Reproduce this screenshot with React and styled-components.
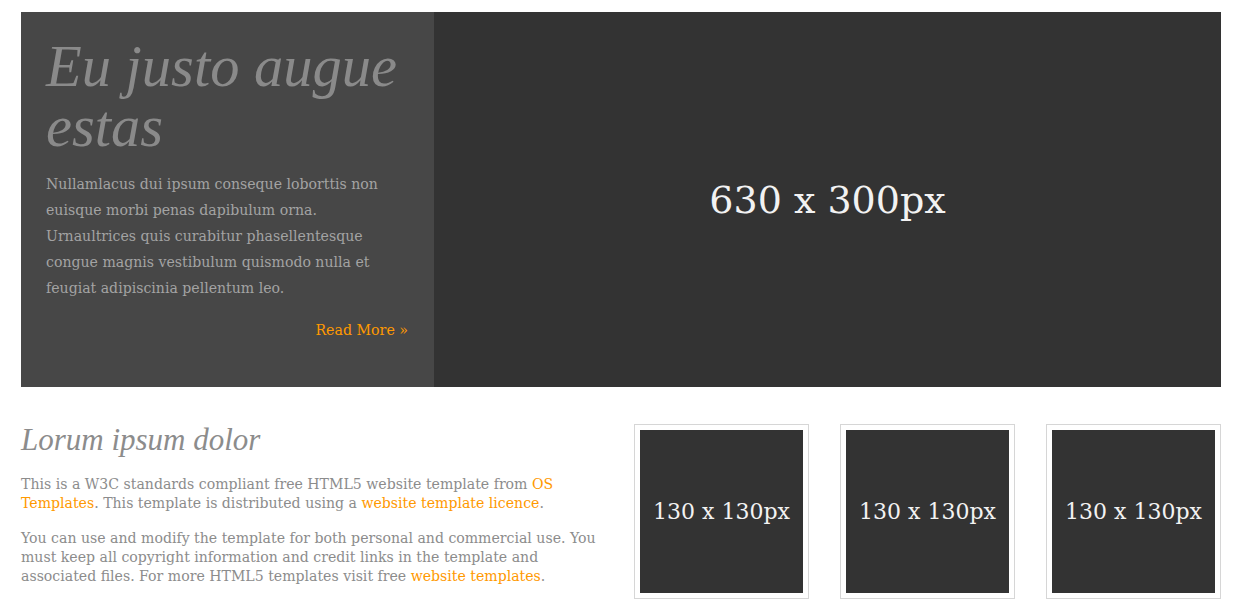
import React from "react";
import styled, { createGlobalStyle } from "styled-components";

const GlobalStyle = createGlobalStyle`
  body {
    margin: 0;
    background: #ffffff;
    font-family: "DejaVu Serif", Georgia, serif;
  }
`;

const Page = styled.div`
  width: 1200px;
  padding: 12px 0 0 21px;
`;

const Hero = styled.section`
  display: flex;
  height: 375px;
  background: #333333;
`;

const HeroText = styled.div`
  width: 413px;
  box-sizing: border-box;
  padding: 25px 26px 0 25px;
  background: #474747;
  display: flex;
  flex-direction: column;
`;

const HeroTitle = styled.h1`
  margin: 0;
  font-family: "Liberation Serif", Georgia, serif;
  font-size: 58.5px;
  line-height: 60px;
  font-style: italic;
  font-weight: normal;
  color: #8a8a8a;
`;

const HeroCopy = styled.p`
  margin: 14px 0 0;
  font-size: 14.1px;
  line-height: 26px;
  color: #a3a3a3;
`;

const ReadMore = styled.a`
  margin-top: 16px;
  align-self: flex-end;
  font-size: 14.2px;
  line-height: 26px;
  color: #ff9900;
  text-decoration: none;
`;

const Placeholder = styled.div`
  flex: 1;
  display: flex;
  align-items: center;
  justify-content: center;
  background: #333333;
  color: #f2f2f2;
  font-size: ${(p) => p.$size}px;
`;

const Lower = styled.section`
  display: flex;
  gap: 33px;
  margin-top: 37px;
`;

const Intro = styled.div`
  width: 580px;
  color: #8c8c8c;
  font-size: 14.1px;
  line-height: 19px;
`;

const IntroTitle = styled.h2`
  margin: 0 0 19px;
  font-family: "Liberation Serif", Georgia, serif;
  font-size: 31px;
  line-height: 32px;
  font-style: italic;
  font-weight: normal;
  color: #8c8c8c;
`;

const IntroCopy = styled.p`
  margin: 0 0 16px;
`;

const Link = styled.a`
  color: #ff9900;
  text-decoration: none;
`;

const Thumbs = styled.div`
  display: flex;
  gap: 31px;
`;

const Thumb = styled.figure`
  margin: 0;
  width: 175px;
  height: 175px;
  box-sizing: border-box;
  padding: 5px;
  border: 1px solid #d6d6d6;
  display: flex;
`;

export default function App() {
  return (
    <>
      <GlobalStyle />
      <Page>
        <Hero>
          <HeroText>
            <HeroTitle>Eu justo augue estas</HeroTitle>
            <HeroCopy>
              Nullamlacus dui ipsum conseque loborttis non euisque morbi penas
              dapibulum orna. Urnaultrices quis curabitur phasellentesque
              congue magnis vestibulum quismodo nulla et feugiat adipiscinia
              pellentum leo.
            </HeroCopy>
            <ReadMore href="#">Read More &raquo;</ReadMore>
          </HeroText>
          <Placeholder $size={38}>630 x 300px</Placeholder>
        </Hero>
        <Lower>
          <Intro>
            <IntroTitle>Lorum ipsum dolor</IntroTitle>
            <IntroCopy>
              This is a W3C standards compliant free HTML5 website template
              from <Link href="#">OS Templates</Link>. This template is
              distributed using a{" "}
              <Link href="#">website template licence</Link>.
            </IntroCopy>
            <IntroCopy>
              You can use and modify the template for both personal and
              commercial use. You must keep all copyright information and
              credit links in the template and associated files. For more
              HTML5 templates visit free{" "}
              <Link href="#">website templates</Link>.
            </IntroCopy>
          </Intro>
          <Thumbs>
            {[1, 2, 3].map((n) => (
              <Thumb key={n}>
                <Placeholder $size={22}>130 x 130px</Placeholder>
              </Thumb>
            ))}
          </Thumbs>
        </Lower>
      </Page>
    </>
  );
}
